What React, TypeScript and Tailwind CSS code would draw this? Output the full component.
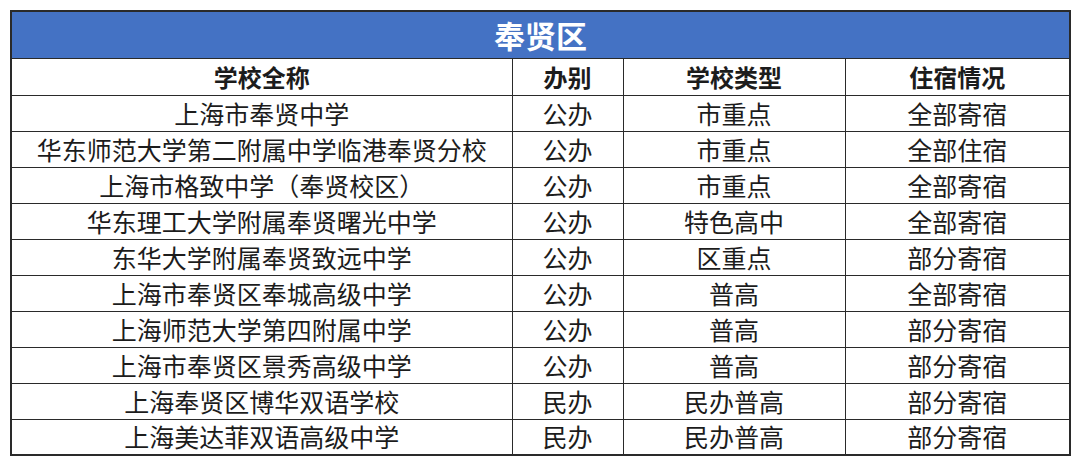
const schools: [string, string, string, string][] = [
  ["上海市奉贤中学", "公办", "市重点", "全部寄宿"],
  ["华东师范大学第二附属中学临港奉贤分校", "公办", "市重点", "全部住宿"],
  ["上海市格致中学（奉贤校区）", "公办", "市重点", "全部寄宿"],
  ["华东理工大学附属奉贤曙光中学", "公办", "特色高中", "全部寄宿"],
  ["东华大学附属奉贤致远中学", "公办", "区重点", "部分寄宿"],
  ["上海市奉贤区奉城高级中学", "公办", "普高", "全部寄宿"],
  ["上海师范大学第四附属中学", "公办", "普高", "部分寄宿"],
  ["上海市奉贤区景秀高级中学", "公办", "普高", "部分寄宿"],
  ["上海奉贤区博华双语学校", "民办", "民办普高", "部分寄宿"],
  ["上海美达菲双语高级中学", "民办", "民办普高", "部分寄宿"],
];

const headers = ["学校全称", "办别", "学校类型", "住宿情况"];

export default function App() {
  return (
    <div
      className="w-[1080px] h-[468px] bg-white pt-[10px] pl-[10px]"
      style={{ fontFamily: '"Noto Sans CJK SC", "Noto Sans", sans-serif' }}
    >
      <table className="border-collapse border-2 border-[#2a2a2a] w-[1059px] table-fixed text-[#1c1c1c]">
        <colgroup>
          <col className="w-[501px]" />
          <col className="w-[111px]" />
          <col className="w-[222px]" />
          <col className="w-[225px]" />
        </colgroup>
        <thead>
          <tr className="h-[47px] bg-[#4472c4]">
            <th colSpan={4} className="border border-[#2a2a2a] text-white text-[31px] font-bold leading-none p-0">
              奉贤区
            </th>
          </tr>
          <tr className="h-[37px]">
            {headers.map((h) => (
              <th key={h} className="border border-[#2a2a2a] text-[24px] font-bold leading-none p-0">
                {h}
              </th>
            ))}
          </tr>
        </thead>
        <tbody>
          {schools.map((row, i) => (
            <tr key={i} className="h-[36px]">
              {row.map((cell, j) => (
                <td key={j} className="border border-[#2a2a2a] text-center text-[25px] leading-none p-0 whitespace-nowrap">
                  {cell}
                </td>
              ))}
            </tr>
          ))}
        </tbody>
      </table>
    </div>
  );
}
